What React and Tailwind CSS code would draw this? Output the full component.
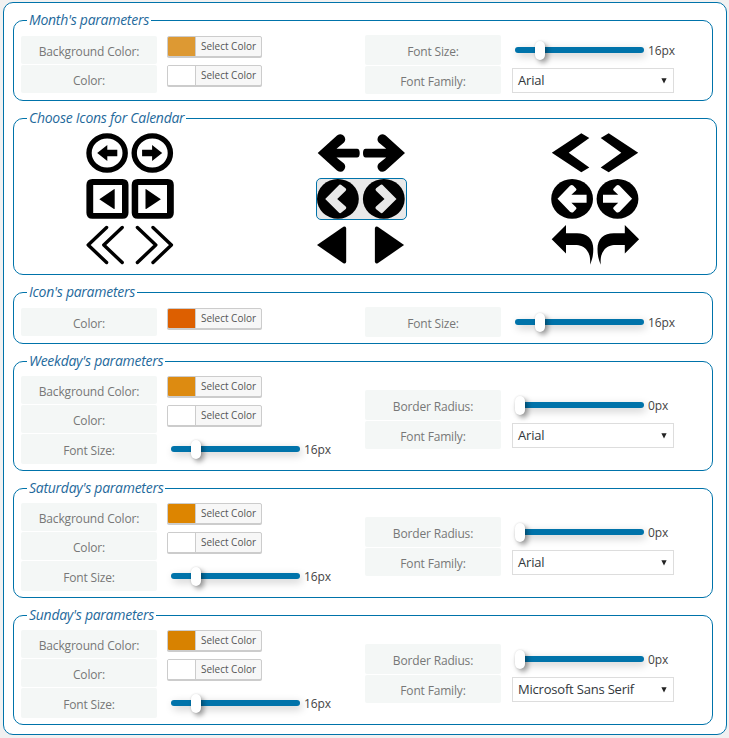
import React from "react";

function Legend({ children }) {
  return (
    <div className="relative z-10 -mt-[11px] ml-[13px] h-5 w-fit whitespace-nowrap bg-white pr-[2px] pl-[2px] text-[14px] leading-5 tracking-[-0.27px] italic text-[#1f6a9c]">
      {children}
    </div>
  );
}

function Group({ title, className, children }) {
  return (
    <section className={"rounded-[10px] border border-[#0073aa] " + className}>
      <Legend>{title}</Legend>
      {children}
    </section>
  );
}

function Row({ label, tall, children }) {
  return (
    <div className={"flex " + (tall ? "h-[30px]" : "h-7")}>
      <div
        className={
          "w-[136px] shrink-0 rounded-[2px] bg-[#f4f7f6] text-center text-[12px] tracking-[-0.17px] text-[#777] " +
          (tall ? "pt-[2px] leading-[29px]" : "pt-[2px] leading-[27px]")
        }
      >
        {label}
      </div>
      {children}
    </div>
  );
}

function ColorRow({ label, color }) {
  return (
    <Row label={label}>
      <button className="ml-[10px] flex h-[21px] w-[95px] overflow-visible rounded-[2px] border border-[#ccc] bg-[#f7f7f7] shadow-[0_1px_0_#ccc]">
        <span className="h-full w-[27px] rounded-l-[1px]" style={{ backgroundColor: color }} />
        <span className="h-full flex-1 border-l border-[#ccc] text-center text-[10px] leading-[19px] text-[#555]">
          Select Color
        </span>
      </button>
    </Row>
  );
}

function SliderRow({ label, value }) {
  return (
    <Row label={label} tall>
      <div className="ml-[14px] flex h-[30px]">
        <div className="relative mt-3 h-[6px] w-[129px] rounded-full bg-[#0073aa] shadow-[2px_3px_8px_rgba(0,0,0,0.22)]">
          <div
            className="absolute -top-[6px] h-[19px] w-[10px] rounded-[5px] bg-white shadow-[3px_3px_5px_rgba(0,0,0,0.35),0_0_2px_rgba(0,0,0,0.15)]"
            style={{ left: value === 0 ? 0 : 20 }}
          />
        </div>
        <span className="ml-[4px] text-[12px] leading-[31px] tracking-[-0.1px] text-[#444]">{value}px</span>
      </div>
    </Row>
  );
}

function SelectRow({ label, value }) {
  return (
    <Row label={label}>
      <div className="mt-[2px] ml-[11px] flex h-[25px] w-[162px] items-center justify-between border border-[#ddd] bg-white pr-[6px] pl-[5px] text-[13px] leading-[23px] tracking-[-0.2px] text-[#32373c]">
        <span>{value}</span>
        <svg width="6" height="6" viewBox="0 0 6 6">
          <path d="M.4 .3H5.6L3 5.4Z" fill="#222" />
        </svg>
      </div>
    </Row>
  );
}

function Mirror({ width, children }) {
  return (
    <>
      {children}
      <g transform={`translate(${width} 0) scale(-1 1)`}>{children}</g>
    </>
  );
}

const shapes = {
  circleOutline: (
    <Mirror width={87.4}>
      <ellipse cx="21.1" cy="20" rx="18.1" ry="17.1" fill="none" stroke="#000" strokeWidth="5.4" />
      <path d="M11.2 20 21.3 12V16.7H31.3V23.3H21.3V28Z" />
    </Mirror>
  ),
  squareOutline: (
    <Mirror width={88.2}>
      <path
        fillRule="evenodd"
        d="M6.4 0H36.5Q42.5 0 42.5 6V33.7Q42.5 39.7 36.5 39.7H6.4Q.4 39.7 .4 33.7V6Q.4 0 6.4 0ZM7.2 6V34H36V6Z"
      />
      <path d="M13.3 20.3 28 10.2Q28.7 9.8 28.7 10.8V29.6Q28.7 30.3 28 30Z" />
    </Mirror>
  ),
  doubleChevron: (
    <Mirror width={87.6}>
      <path
        d="M20.6 2.5 2.2 20 20.6 37.5M36.2 2.5 17.8 20 36.2 37.5"
        fill="none"
        stroke="#000"
        strokeWidth="3.4"
        strokeLinecap="round"
        strokeLinejoin="round"
      />
    </Mirror>
  ),
  boldArrow: (
    <Mirror width={88.7}>
      <path d="M.7 20 20 2.6Q24 -.5 27 3 29.5 6.5 27 9.5L19.5 15.7H40Q42.7 15.7 42.7 20 42.7 24.5 40 24.5H19.5L27 30.5Q29.5 33.5 27 37 24 40.5 20 37.4Z" />
    </Mirror>
  ),
  circleChevron: (
    <Mirror width={87.7}>
      <ellipse cx="20.9" cy="19.9" rx="20.9" ry="19.9" />
      <path
        fill="#e9e9e9"
        d="M8.2 20 21.6 6.4Q22.8 5 24.3 6L28.6 9.3Q29.8 10.4 28.7 11.7L20.2 20 28.7 27.6Q29.9 28.8 28.8 30L24.4 33.6Q23 34.8 21.8 33.6Z"
      />
    </Mirror>
  ),
  triangle: (
    <Mirror width={87.1}>
      <path d="M0 20 26.4 1.8Q29 .6 29.2 3.4V36.6Q29 39.4 26.4 38.3Z" />
    </Mirror>
  ),
  chevron: (
    <Mirror width={88}>
      <path d="M.8 19.8 30.3 .3 38.3 5 17.7 19.8 38.3 34.4 30.3 39.3Z" />
    </Mirror>
  ),
  circleArrow: (
    <Mirror width={87.6}>
      <ellipse cx="21.1" cy="19.9" rx="20.9" ry="19.9" />
      <path
        fill="#fff"
        d="M6.5 19.7 19 6.8Q20.8 5.3 22.4 6.8L25 9.4Q26 10.4 25 11.4L20.4 15.7H35.6V23.7H20.4L25 28.2Q26 29.2 25 30.2L22.4 32.9Q20.8 34.2 19 32.7Z"
      />
    </Mirror>
  ),
  curvedArrow: (
    <Mirror width={88.8}>
      <path d="M.7 14.3 15 0V8.3H26C36 8.3 42.3 14 42.3 24 42.3 31 41 35 39 39.7 39.6 33 38.6 29 36 25.5 33.4 21.5 29 20 24 20H15V28.4Z" />
    </Mirror>
  ),
};

function IconPair({ name, selected }) {
  return (
    <div
      className={
        "h-[42px] w-[91px] rounded-[5px] border " +
        (selected ? "border-[#0073aa] bg-[#e9e9e9]" : "border-transparent")
      }
    >
      <svg width="89" height="40" viewBox="0 0 89 40" className="block overflow-visible">
        {shapes[name]}
      </svg>
    </div>
  );
}

function DayGroup({ title, color, font }) {
  return (
    <Group title={title} className="h-[110px] w-[700px]">
      <div className="flex pl-[7px]">
        <div className="mt-[5px] flex w-[344px] flex-col gap-px">
          <ColorRow label="Background Color:" color={color} />
          <ColorRow label="Color:" color="#fff" />
          <SliderRow label="Font Size:" value={16} />
        </div>
        <div className="mt-[19px] flex flex-col gap-px">
          <SliderRow label="Border Radius:" value={0} />
          <SelectRow label="Font Family:" value={font} />
        </div>
      </div>
    </Group>
  );
}

export default function App() {
  return (
    <div className="h-[738px] w-[729px] overflow-hidden bg-[#f1f1f1] pt-[2px] pl-[3px] font-['Open_Sans',sans-serif]">
      <main className="flex h-[733px] w-[724px] flex-col gap-[17px] rounded-[10px] border border-[#0073aa] bg-white pt-[17px] pl-[9px]">
        <Group title="Month's parameters" className="h-[81px] w-[700px]">
          <div className="flex pl-[7px]">
            <div className="mt-[6px] flex w-[344px] flex-col gap-px">
              <ColorRow label="Background Color:" color="#dd9933" />
              <ColorRow label="Color:" color="#fff" />
            </div>
            <div className="mt-[5px] flex flex-col gap-px">
              <SliderRow label="Font Size:" value={16} />
              <SelectRow label="Font Family:" value="Arial" />
            </div>
          </div>
        </Group>

        <Group title="Choose Icons for Calendar" className="h-[157px] w-[704px]">
          <div className="mt-[4px] flex pl-[71px]">
            <div className="flex w-[231px] flex-col gap-1">
              <IconPair name="circleOutline" />
              <IconPair name="squareOutline" />
              <IconPair name="doubleChevron" />
            </div>
            <div className="flex w-[234px] flex-col gap-1">
              <IconPair name="boldArrow" />
              <IconPair name="circleChevron" selected />
              <IconPair name="triangle" />
            </div>
            <div className="flex flex-col gap-1">
              <IconPair name="chevron" />
              <IconPair name="circleArrow" />
              <IconPair name="curvedArrow" />
            </div>
          </div>
        </Group>

        <Group title="Icon's parameters" className="h-[52px] w-[700px]">
          <div className="flex pl-[7px]">
            <div className="mt-[6px] w-[344px]">
              <ColorRow label="Color:" color="#dd5f00" />
            </div>
            <div className="mt-[5px]">
              <SliderRow label="Font Size:" value={16} />
            </div>
          </div>
        </Group>

        <DayGroup title="Weekday's parameters" color="#dd8b11" font="Arial" />
        <DayGroup title="Saturday's parameters" color="#dd8500" font="Arial" />
        <DayGroup title="Sunday's parameters" color="#d88200" font="Microsoft Sans Serif" />
      </main>
    </div>
  );
}
